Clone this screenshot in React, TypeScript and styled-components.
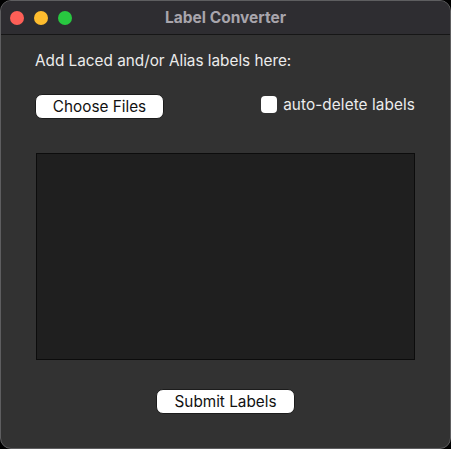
import React from "react";
import styled, { createGlobalStyle } from "styled-components";

const Global = createGlobalStyle`
  html, body { margin: 0; padding: 0; background: #000; }
  body { font-family: Inter, "Noto Sans", sans-serif; }
`;

const Window = styled.div`
  box-sizing: border-box;
  width: 451px;
  height: 449px;
  border: 1px solid #5e5e60;
  border-radius: 11px;
  background: #323232;
  overflow: hidden;
  display: flex;
  flex-direction: column;
`;

const TitleBar = styled.div`
  box-sizing: border-box;
  height: 34px;
  flex: none;
  background: #2e2d31;
  border-bottom: 1px solid #161616;
  display: flex;
  align-items: center;
  position: relative;
`;

const Lights = styled.div`
  display: flex;
  gap: 10px;
  padding-left: 9px;
  padding-top: 1px;
`;

const Light = styled.span<{ $c: string }>`
  width: 14px;
  height: 14px;
  border-radius: 50%;
  background: ${(p) => p.$c};
`;

const Title = styled.div`
  position: absolute;
  left: 0;
  right: 0;
  text-align: center;
  font-size: 15.5px;
  font-weight: 700;
  color: #a8a5ac;
  pointer-events: none;
`;

const Content = styled.div`
  flex: 1;
  display: flex;
  flex-direction: column;
  padding: 15px 35px 0 34px;
`;

const Prompt = styled.div`
  font-size: 15.3px;
  color: #ececec;
  height: 21px;
  line-height: 21px;
`;

const Row = styled.div`
  margin-top: 23px;
  display: flex;
  align-items: flex-start;
  justify-content: space-between;
`;

const Button = styled.button<{ $w: number }>`
  box-sizing: border-box;
  width: ${(p) => p.$w}px;
  height: 25px;
  padding: 0;
  background: #ffffff;
  border: 1px solid #1c1c1c;
  border-radius: 7px;
  font-family: Inter, "Noto Sans", sans-serif;
  font-size: 15.3px;
  color: #111;
  display: flex;
  align-items: center;
  justify-content: center;
`;

const CheckLabel = styled.label`
  display: flex;
  align-items: center;
  gap: 6px;
  font-size: 15.3px;
  letter-spacing: 0.1px;
  color: #ececec;
  margin-top: 1px;
`;

const Box = styled.span`
  width: 16px;
  height: 17px;
  border-radius: 4px;
  background: #fff;
`;

const DropArea = styled.div`
  box-sizing: border-box;
  margin-top: 34px;
  margin-left: 1px;
  height: 207px;
  background: #1f1f1f;
  border: 1px solid #0c0c0c;
`;

const Footer = styled.div`
  margin-top: 29px;
  display: flex;
  justify-content: center;
  padding-left: 1px;
`;

export default function App() {
  return (
    <>
      <Global />
      <Window>
        <TitleBar>
          <Lights>
            <Light $c="#fe5f57" />
            <Light $c="#febc2e" />
            <Light $c="#28c840" />
          </Lights>
          <Title>Label Converter</Title>
        </TitleBar>
        <Content>
          <Prompt>Add Laced and/or Alias labels here:</Prompt>
          <Row>
            <Button $w={129}>Choose Files</Button>
            <CheckLabel>
              <Box />
              auto-delete labels
            </CheckLabel>
          </Row>
          <DropArea />
          <Footer>
            <Button $w={139}>Submit Labels</Button>
          </Footer>
        </Content>
      </Window>
    </>
  );
}
